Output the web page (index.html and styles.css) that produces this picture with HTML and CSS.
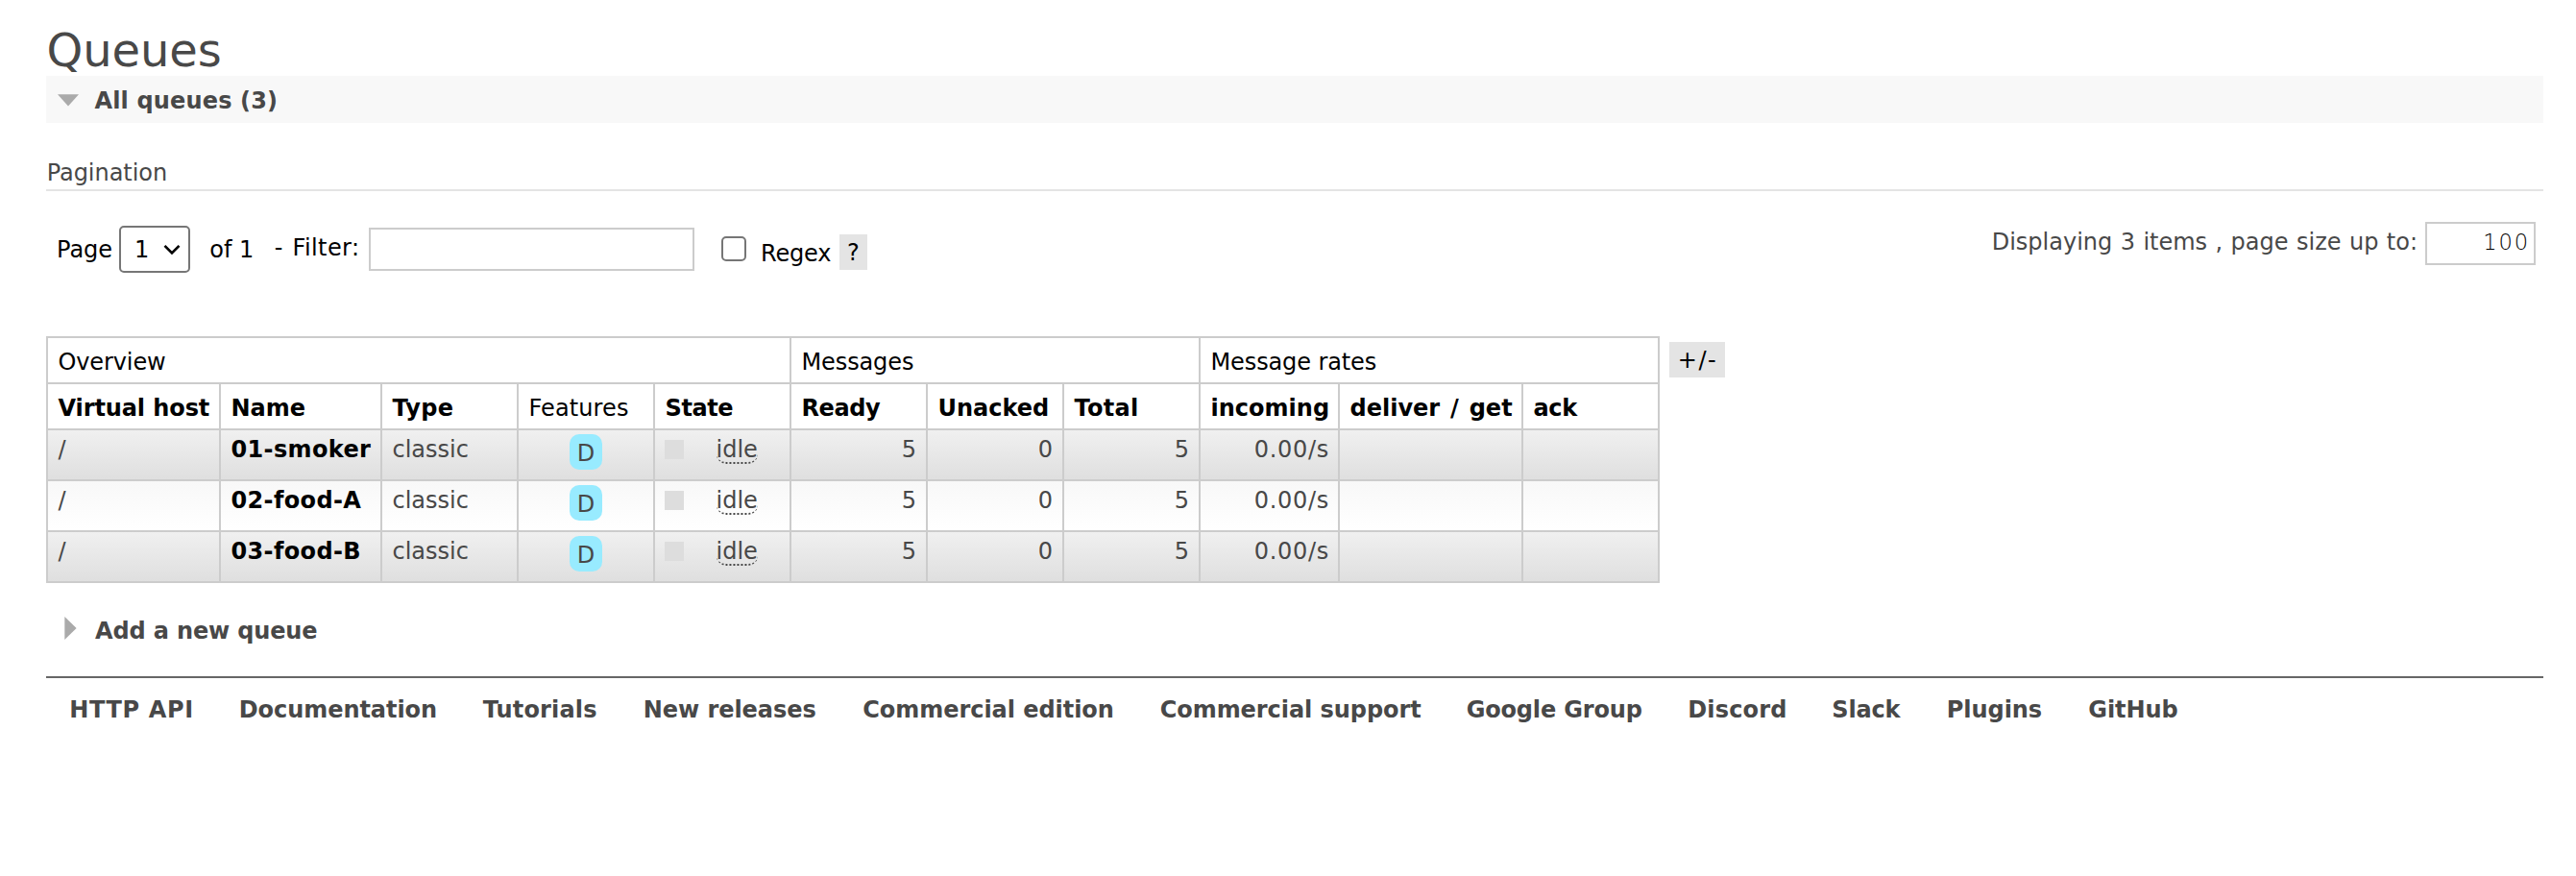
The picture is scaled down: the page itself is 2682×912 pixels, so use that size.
FILE: index.html
```
<!DOCTYPE html>
<html lang="en">
<head>
<meta charset="utf-8">
<title>Queues</title>
<link rel="stylesheet" href="styles.css">
</head>
<body>
<main class="page">
  <h1 class="title">Queues</h1>
  <h2 class="section section-open">
    <svg class="arrow-down" viewBox="0 0 22 13"><path d="M0 .3h22L11 12.6z"/></svg>
    <span class="section-label">All queues (3)</span>
  </h2>
  <h3 class="subheading">Pagination</h3>

  <div class="controls">
    <div class="controls-left">
      <label class="page-label">Page</label>
      <div class="select"><span>1</span><svg class="chevron" viewBox="0 0 18 12"><path d="M1.5 1.8 9 9.5l7.500-7.700"/></svg></div>
      <span class="page-count">of 1</span>
      <label class="filter-label">- Filter:</label>
      <div class="filter-input"></div>
      <div class="checkbox"></div>
      <label class="regex-label">Regex</label>
      <span class="chip help">?</span>
    </div>
    <div class="controls-right">
      <span class="display-label">Displaying 3 items , page size up to:</span>
      <div class="size-input">100</div>
    </div>
  </div>

  <div class="table-area">
    <table class="queues">
      <colgroup><col class="c-vhost"><col class="c-name"><col class="c-std"><col class="c-std"><col class="c-std"><col class="c-std"><col class="c-std"><col class="c-std"><col class="c-incoming"><col class="c-deliver"><col class="c-std"></colgroup>
      <thead>
        <tr><th colspan="5" class="plain">Overview</th><th colspan="3" class="plain">Messages</th><th colspan="3" class="plain">Message rates</th></tr>
        <tr><th class="snug">Virtual host</th><th>Name</th><th class="wide">Type</th><th class="plain features">Features</th><th class="tight">State</th><th class="tight">Ready</th><th>Unacked</th><th class="wide">Total</th><th>incoming</th><th class="deliver">deliver / get</th><th class="tight">ack</th></tr>
      </thead>
      <tbody>
        <tr class="odd"><td>/</td><td class="name">01-smoker</td><td>classic</td><td class="features-cell"><div class="badge">D</div></td><td class="state-cell"><div class="state"><i class="dot"></i><span class="idle">idle</span></div></td><td class="num">5</td><td class="num">0</td><td class="num">5</td><td class="num rate">0.00/s</td><td></td><td></td></tr>
        <tr class="even"><td>/</td><td class="name">02-food-A</td><td>classic</td><td class="features-cell"><div class="badge">D</div></td><td class="state-cell"><div class="state"><i class="dot"></i><span class="idle">idle</span></div></td><td class="num">5</td><td class="num">0</td><td class="num">5</td><td class="num rate">0.00/s</td><td></td><td></td></tr>
        <tr class="odd"><td>/</td><td class="name">03-food-B</td><td>classic</td><td class="features-cell"><div class="badge">D</div></td><td class="state-cell"><div class="state"><i class="dot"></i><span class="idle">idle</span></div></td><td class="num">5</td><td class="num">0</td><td class="num">5</td><td class="num rate">0.00/s</td><td></td><td></td></tr>
      </tbody>
    </table>
    <span class="chip columns">+/-</span>
  </div>

  <h2 class="section section-closed">
    <svg class="arrow-right" viewBox="0 0 13 24"><path d="M.3 0v24L12.600 12z"/></svg>
    <span class="section-label add-label">Add a new queue</span>
  </h2>

  <footer class="footer">
    <a class="api">HTTP API</a><a>Documentation</a><a class="loose">Tutorials</a><a>New releases</a><a>Commercial edition</a><a>Commercial support</a><a class="close">Google Group</a><a class="loose">Discord</a><a class="close">Slack</a><a>Plugins</a><a>GitHub</a>
  </footer>
</main>
</body>
</html>
```

FILE: styles.css
```
* { box-sizing: border-box; }

body {
  margin: 0;
  background: #fff;
  color: #484848;
  font: 24px/28px "DejaVu Sans", Verdana, sans-serif;
  white-space: nowrap;
}

h1, h2, h3 { margin: 0; font-size: 24px; }
svg { display: block; flex: none; }

.page { padding: 25px 34px 0 48px; }

.title { padding-left: 0.5px; font-size: 48px; line-height: 54px; font-weight: 400; letter-spacing: -0.1px; }

.section { display: flex; align-items: flex-start; }
.section-open { height: 49px; padding: 12px 0 0 12px; background: #f8f8f8; }
.section-open .section-label { margin-left: 16.500px; letter-spacing: 0.15px; }
.arrow-down { width: 22px; height: 13px; margin-top: 7px; fill: #aaa; }

.subheading {
  margin-top: 38px;
  padding: 0 0 3px 0.7px;
  border-bottom: 2px solid #e4e4e4;
  font-weight: 400;
  letter-spacing: -0.05px;
}

.controls {
  display: flex;
  justify-content: space-between;
  align-items: flex-start;
  height: 151px;
  padding: 32px 8px 0 11px;
}
.controls-left { display: flex; align-items: flex-start; color: #000; }
.page-label { width: 65px; margin-top: 15px; }
.select {
  display: flex;
  justify-content: space-between;
  width: 74px;
  height: 49px;
  margin-top: 4px;
  padding: 9px 8px 0 14px;
  border: 2px solid #767676;
  border-radius: 5px;
}
.chevron { width: 18px; height: 12px; margin-top: 8px; fill: none; stroke: #000; stroke-width: 2.6; }
.page-count { width: 67.500px; margin: 15px 0 0 20.3px; }
.filter-label { width: 98.2px; margin-top: 13px; letter-spacing: 0.4px; word-spacing: 1.600px; }
.filter-input { width: 339px; height: 45px; margin-top: 6px; border: 2px solid #ccc; }
.checkbox {
  width: 26px;
  height: 26px;
  margin: 15px 15px 0 28px;
  border: 2px solid #767676;
  border-radius: 5px;
}
.regex-label { width: 82px; margin-top: 19px; letter-spacing: -0.2px; }

.chip { height: 37px; padding-top: 5px; background: #e4e4e4; color: #000; text-align: center; }
.help { width: 29px; margin-top: 13px; }
.columns { width: 58px; margin: 6px 0 0 10px; padding-left: 1px; letter-spacing: 1.5px; }

.controls-right { display: flex; align-items: flex-start; }
.display-label { margin: 7px 8px 0 0; word-spacing: 0.8px; }
.size-input {
  width: 115px;
  height: 45px;
  padding: 5px 4px 0 0;
  border: 2px solid #ccc;
  color: #000;
  font-size: 22.5px;
  font-weight: 200;
  letter-spacing: 1.9px;
  text-align: right;
}

.table-area { display: flex; align-items: flex-start; }

.queues { width: 1680px; border-collapse: collapse; table-layout: fixed; }
.c-vhost { width: 180px; }
.c-name { width: 168px; }
.c-std { width: 142px; }
.c-incoming { width: 145px; }
.c-deliver { width: 191px; }

.queues th, .queues td { border: 2px solid #ccc; text-align: left; vertical-align: top; }
.queues th { height: 48px; padding: 11px 9px 7px 10.500px; color: #000; }
.queues td { height: 53px; padding: 6px 10px 0 10.500px; }
.queues .plain { font-weight: 400; letter-spacing: -0.12px; }
.queues .features { letter-spacing: 0.1px; }
.queues .features-cell { padding: 4px 10px 0; }
.queues .state-cell { padding-left: 10px; }
.snug { letter-spacing: -0.1px; }
.tight { letter-spacing: -0.4px; }
.wide { letter-spacing: 0.3px; }
.deliver { word-spacing: 2.5px; }

.odd td { background: linear-gradient(#f0f0f0, #dfdfdf); }
.even td { background: linear-gradient(#f8f8f8, #fff); }

.queues .name { color: #000; font-weight: 700; letter-spacing: 0.35px; }
.queues .num { text-align: right; }
.queues .rate { padding-right: 9px; letter-spacing: 0.7px; }

.badge {
  width: 34px;
  height: 37px;
  margin: 0 auto;
  padding-top: 6px;
  border-radius: 10px;
  background: #98ebff;
  text-align: center;
}

.state { display: flex; align-items: flex-start; }
.dot { width: 20px; height: 20px; margin: 4px 33.500px 0 0; background: #ddd; }
.idle { height: 29px; border-bottom: 2px dotted #484848; border-radius: 10px; }

.section-closed { height: 97px; padding: 35px 0 0 19px; }
.arrow-right { width: 13px; height: 24px; fill: #aaa; }
.add-label { margin: 1px 0 0 19px; letter-spacing: -0.15px; }

.footer {
  display: grid;
  grid-template-columns: 176.5px 254px 167px 228.6px 309.4px 319px 230.6px 150px 119.5px 147.5px auto;
  padding: 19px 0 0 24.200px;
  border-top: 2px solid #666;
  font-weight: 700;
  letter-spacing: -0.05px;
}
.api { letter-spacing: 0.65px; }
.loose { letter-spacing: 0.15px; }
.close { letter-spacing: -0.17px; }
```
